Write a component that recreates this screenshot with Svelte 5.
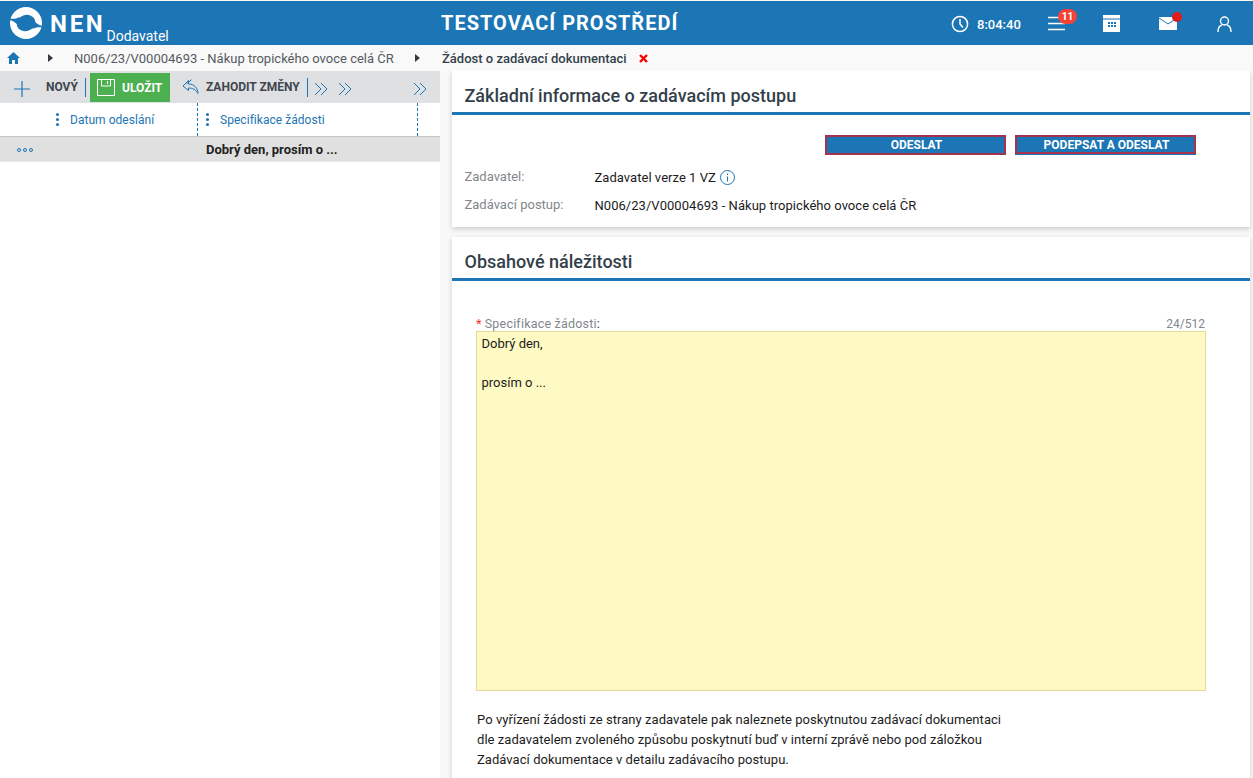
<script>
  const chev = "M1 1l6 6-6 6M7 1l6 6-6 6";
  const channel = "M10.500 11C7 13 4 13 .5 12.500V14C4 15 7 16.500 9 19.500Z";
</script>

<div class="page">
  <header class="top">
    <div class="brand">
      <svg class="logo" viewBox="0 0 34 34" aria-hidden="true">
        <circle cx="17" cy="17" r="16" fill="#fff"/>
        <ellipse cx="17" cy="17" rx="9.500" ry="8" transform="rotate(-20 17 17)" fill="#1c75b4"/>
        <path fill="#1c75b4" d={channel}/>
        <path fill="#1c75b4" transform="rotate(180 17 17)" d={channel}/>
      </svg>
      <span class="nen">NEN</span>
      <span class="role">Dodavatel</span>
    </div>
    <div class="env">TESTOVACÍ PROSTŘEDÍ</div>
    <div class="tools">
      <span class="clock">
        <svg width="18" height="18" viewBox="0 0 18 18" fill="none" stroke="#fff" stroke-width="1.500"><circle cx="9" cy="9" r="7.600"/><path d="M9 4v5l3 3.500"/></svg>
        <b>8:04:40</b>
      </span>
      <span class="menu">
        <svg width="17" height="15" viewBox="0 0 17 15" stroke="#fff" stroke-width="1.600"><path d="M0 1.500h17M0 7.500h17M0 13.500h17"/></svg>
        <i class="badge">11</i>
      </span>
      <svg class="cal" width="17" height="17" viewBox="0 0 17 17"><path fill="#fff" d="M0 0h17v17H0z"/><path fill="#1c75b4" d="M0 3.500h17v1H0zM5 7h2v2H5zM8 7h2v2H8zM11 7h2v2h-2zM5 10h2v2H5zM8 10h2v2H8zM11 10h2v2h-2z"/></svg>
      <span class="mail">
        <svg width="18" height="13" viewBox="0 0 18 13"><path fill="#fff" d="M0 0h18v13H0z"/><path fill="none" stroke="#1c75b4" stroke-width="1" d="M0 1l9 6 9-6"/></svg>
        <i class="dot"></i>
      </span>
      <svg class="user" width="15" height="16" viewBox="0 0 15 16" fill="none" stroke="#fff" stroke-width="1.400"><circle cx="7.500" cy="5" r="4"/><path d="M1 16c0-4 2-6.500 4-7M14 16c0-4-2-6.500-4-7"/></svg>
    </div>
  </header>

  <nav class="crumbs">
    <svg class="home" width="13" height="12" viewBox="0 0 13 12"><path fill="#1c75b4" d="M6.500 0L13 6h-2v6H8V8H5v4H2V6H0z"/></svg>
    <i class="tri t1"></i>
    <span class="c1">N006/23/V00004693 - Nákup tropického ovoce celá ČR</span>
    <i class="tri t2"></i>
    <b class="c2">Žádost o zadávací dokumentaci</b>
    <svg class="x" width="9" height="9" viewBox="0 0 9 9" stroke="#f00" stroke-width="2.400"><path d="M1 1l7 7M8 1L1 8"/></svg>
  </nav>

  <div class="main">
    <aside class="left">
      <div class="bar">
        <svg class="plus" width="16" height="16" viewBox="0 0 16 16" stroke="#1c75b4" stroke-width="1.200"><path d="M8 0v16M0 8h16"/></svg>
        <b class="new">NOVÝ</b>
        <i class="sep"></i>
        <button class="save">
          <svg width="18" height="17" viewBox="0 0 18 17" fill="none" stroke="#fff" stroke-width="1"><path d="M.5.500h17v16H.5zM4.500.500v6.500h9V.5M10.500 2v3"/></svg>
          ULOŽIT
        </button>
        <svg class="undo" width="17" height="15" viewBox="0 0 17 15" fill="none" stroke="#1c75b4" stroke-width="1"><path d="M6.500 1.500L1 7l5.500 4.500V9c4 0 7.500 1.500 9.500 5.500C16 9 12 5 6.500 5zM9.500.7L4.500 5"/></svg>
        <b class="discard">ZAHODIT ZMĚNY</b>
        <i class="sep s2"></i>
        <svg class="ch c-a" width="14" height="14" viewBox="0 0 14 14" fill="none" stroke="#1c75b4"><path d={chev}/></svg>
        <svg class="ch c-b" width="14" height="14" viewBox="0 0 14 14" fill="none" stroke="#1c75b4"><path d={chev}/></svg>
        <svg class="ch c-c" width="14" height="14" viewBox="0 0 14 14" fill="none" stroke="#1c75b4"><path d={chev}/></svg>
      </div>
      <div class="thead">
        <div class="col c-date"><i class="dots"></i><span>Datum odeslání</span></div>
        <div class="col c-spec"><i class="dots"></i><span>Specifikace žádosti</span></div>
      </div>
      <div class="trow">
        <div class="rowdots"><i></i><i></i><i></i></div>
        <div class="rowtext">Dobrý den, prosím o ...</div>
      </div>
    </aside>

    <main class="right">
      <section class="card first">
        <h2>Základní informace o zadávacím postupu</h2>
        <div class="actions">
          <button class="act a1">ODESLAT</button>
          <button class="act a2">PODEPSAT A ODESLAT</button>
        </div>
        <div class="line l1">
          <span class="lab">Zadavatel:</span>
          <span class="val">Zadavatel verze 1 VZ</span>
          <svg class="info" width="15" height="15" viewBox="0 0 15 15" fill="none" stroke="#1c75b4"><circle cx="7.500" cy="7.500" r="7"/><path d="M7.500 6.500v5M7.500 3.500v1.500"/></svg>
        </div>
        <div class="line l2">
          <span class="lab">Zadávací postup:</span>
          <span class="val">N006/23/V00004693 - Nákup tropického ovoce celá ČR</span>
        </div>
      </section>

      <section class="card second">
        <h2>Obsahové náležitosti</h2>
        <div class="field">
          <div class="fhead">
            <span><em>*</em> <span class="flab">Specifikace žádosti</span>:</span>
            <span class="count">24/512</span>
          </div>
          <div class="area">Dobrý den,<br><br>prosím o ...</div>
        </div>
        <p class="note">Po vyřízení žádosti ze strany zadavatele pak naleznete poskytnutou zadávací dokumentaci<br>dle zadavatelem zvoleného způsobu poskytnutí buď v interní zprávě nebo pod záložkou<br>Zadávací dokumentace v detailu zadávacího postupu.</p>
      </section>
    </main>
  </div>
</div>

<style>
  :global(body) { margin: 0; background: #f8f8f8; font-family: Roboto, "Liberation Sans", sans-serif; overflow: hidden; }
  .page { height: 778px; overflow: hidden; display: flex; flex-direction: column; }
  i, em { font-style: normal; }
  button { font-family: inherit; cursor: pointer; }

  .top { height: 44px; margin-top: 1px; background: #1c75b4; color: #fff; position: relative; display: flex; align-items: center; flex: none; }
  .brand { display: flex; align-items: flex-start; height: 44px; padding-left: 9px; }
  .logo { width: 34px; height: 34px; margin-top: 5px; }
  .nen { font-size: 24px; font-weight: 700; letter-spacing: 2.700px; margin: 7px 0 0 7px; line-height: 32px; }
  .role { font-size: 14px; line-height: 16px; margin: 27px 0 0 1px; }
  .env { position: absolute; left: 441px; top: 10px; font-size: 20px; font-weight: 700; letter-spacing: 1px; line-height: 24px; }
  .tools { margin-left: auto; display: flex; align-items: center; }
  .clock { position: absolute; left: 951px; top: 14px; display: flex; align-items: center; gap: 8px; font-size: 13px; }
  .clock b { font-weight: 500; }
  .menu { position: absolute; left: 1048px; top: 15px; height: 15px; }
  .menu svg, .mail svg, .cal, .user { display: block; }
  .badge { position: absolute; left: 10px; top: -7px; width: 19px; height: 15px; border-radius: 8px; background: #f44336; font-size: 10px; font-weight: 700; line-height: 15px; text-align: center; }
  .cal { position: absolute; left: 1103px; top: 14px; }
  .mail { position: absolute; left: 1159px; top: 16px; }
  .dot { position: absolute; left: 13px; top: -5px; width: 10px; height: 10px; border-radius: 50%; background: #dd1c1c; }
  .user { position: absolute; left: 1217px; top: 15px; }

  .crumbs { height: 26px; flex: none; background: #f9f9f9; position: relative; font-size: 13px; line-height: 27px; color: #555b61; }
  .crumbs > * { position: absolute; }
  .home { left: 7px; top: 7px; }
  .tri { width: 0; height: 0; border-left: 5px solid #333a42; border-top: 4px solid transparent; border-bottom: 4px solid transparent; top: 9px; }
  .t1 { left: 48px; }
  .t2 { left: 415px; }
  .c1 { left: 74px; }
  .c2 { left: 442px; color: #333f4a; font-weight: 500; }
  .x { left: 639px; top: 9px; }

  .main { flex: 1; display: flex; min-height: 0; }
  .left { width: 440px; flex: none; background: #fff; height: 100%; }
  .bar { height: 32px; background: #dfe0e2; position: relative; font-size: 12px; color: #3f464e; }
  .bar > * { position: absolute; }
  .plus { left: 14px; top: 10px; }
  .new { left: 46px; top: 9px; font-weight: 700; }
  .sep { width: 1px; height: 19px; background: #1c75b4; top: 7px; left: 85px; }
  .s2 { left: 307px; }
  .save { left: 90px; top: 2px; width: 80px; height: 29px; border: 0; padding: 0 0 0 32px; text-align: left; background: #4caf50; color: #fff; font-size: 12px; font-weight: 700; }
  .save svg { position: absolute; left: 7px; top: 6px; }
  .undo { left: 182px; top: 8px; }
  .discard { left: 206px; top: 9px; font-weight: 700; }
  .ch { top: 11px; }
  .c-a { left: 314px; }
  .c-b { left: 338px; }
  .c-c { left: 413px; }

  .thead { height: 33px; display: flex; border-bottom: 1px solid #c4c4c4; font-size: 12px; color: #1c75b4; letter-spacing: .04px; }
  .col { position: relative; line-height: 34px; box-sizing: border-box; }
  .c-date { width: 198px; border-right: 1px dashed #1c75b4; padding-left: 70px; }
  .c-spec { width: 220px; border-right: 1px dashed #1c75b4; padding-left: 22px; }
  .dots { position: absolute; top: 10px; width: 3px; height: 3px; border-radius: 50%; background: #1c75b4; box-shadow: 0 5px 0 #1c75b4, 0 10px 0 #1c75b4; }
  .c-date .dots { left: 56px; }
  .c-spec .dots { left: 8px; }
  .trow { height: 25px; box-sizing: border-box; background: #e0e0e0; display: flex; align-items: center; border-bottom: 1px solid #e9e9e9; padding-top: 1px; }
  .rowdots { width: 206px; padding-left: 17px; box-sizing: border-box; display: flex; gap: 2px; }
  .rowdots i { border: 1px solid #1c75b4; border-radius: 50%; width: 2px; height: 2px; }
  .rowtext { font-size: 13px; font-weight: 700; color: #222; }

  .right { flex: 1; padding: 0 3px 0 12px; display: flex; flex-direction: column; gap: 10px; min-width: 0; }
  .card { background: #fff; box-shadow: 0 2px 5px rgba(0,0,0,.18); }
  .first { height: 156px; }
  .second { flex: 1; }
  h2 { margin: 0; height: 41px; border-bottom: 3px solid #1c75b4; padding-left: 12.500px; font-size: 18px; font-weight: 500; line-height: 49px; color: #333f4a; box-sizing: content-box; }
  .actions { display: flex; gap: 9px; padding: 20px 0 0 373px; align-items: flex-start; }
  .act { height: 20px; padding: 0 0 0 2px; border: 2px solid #a5334f; background: #1c75b4; color: #fff; font-size: 12px; font-weight: 700; line-height: 15px; }
  .a1 { width: 181px; }
  .a2 { width: 181px; height: 19px; padding-top: 1px; box-shadow: 0 1px 0 #1c75b4; }
  .line { position: relative; display: flex; align-items: center; font-size: 13px; height: 28px; padding-left: 12.500px; }
  .l1 { margin-top: 8px; }
  .lab { width: 130px; color: #83878b; margin-top: -2px; }
  .val { color: #1c1c1c; letter-spacing: .04px; }
  .info { margin-left: 4px; }

  .field { margin: 0 0 0 24px; padding-top: 36px; width: 730px; }
  .fhead { display: flex; justify-content: space-between; font-size: 12.500px; line-height: 14px; height: 14px; color: #333; }
  .fhead em { color: #e53935; font-size: 13px; }
  .flab { color: #83878b; letter-spacing: .2px; }
  .count { color: #83878b; font-size: 12px; padding-right: 1px; }
  .area { box-sizing: border-box; height: 360px; background: #fff9c4; border: 1px solid #e3d99b; padding: 2px 4.500px; font-size: 13px; line-height: 19.500px; color: #1c1c1c; }
  .note { margin: 19px 0 0 25px; font-size: 13px; line-height: 20px; color: #1c1c1c; letter-spacing: .05px; }
</style>
